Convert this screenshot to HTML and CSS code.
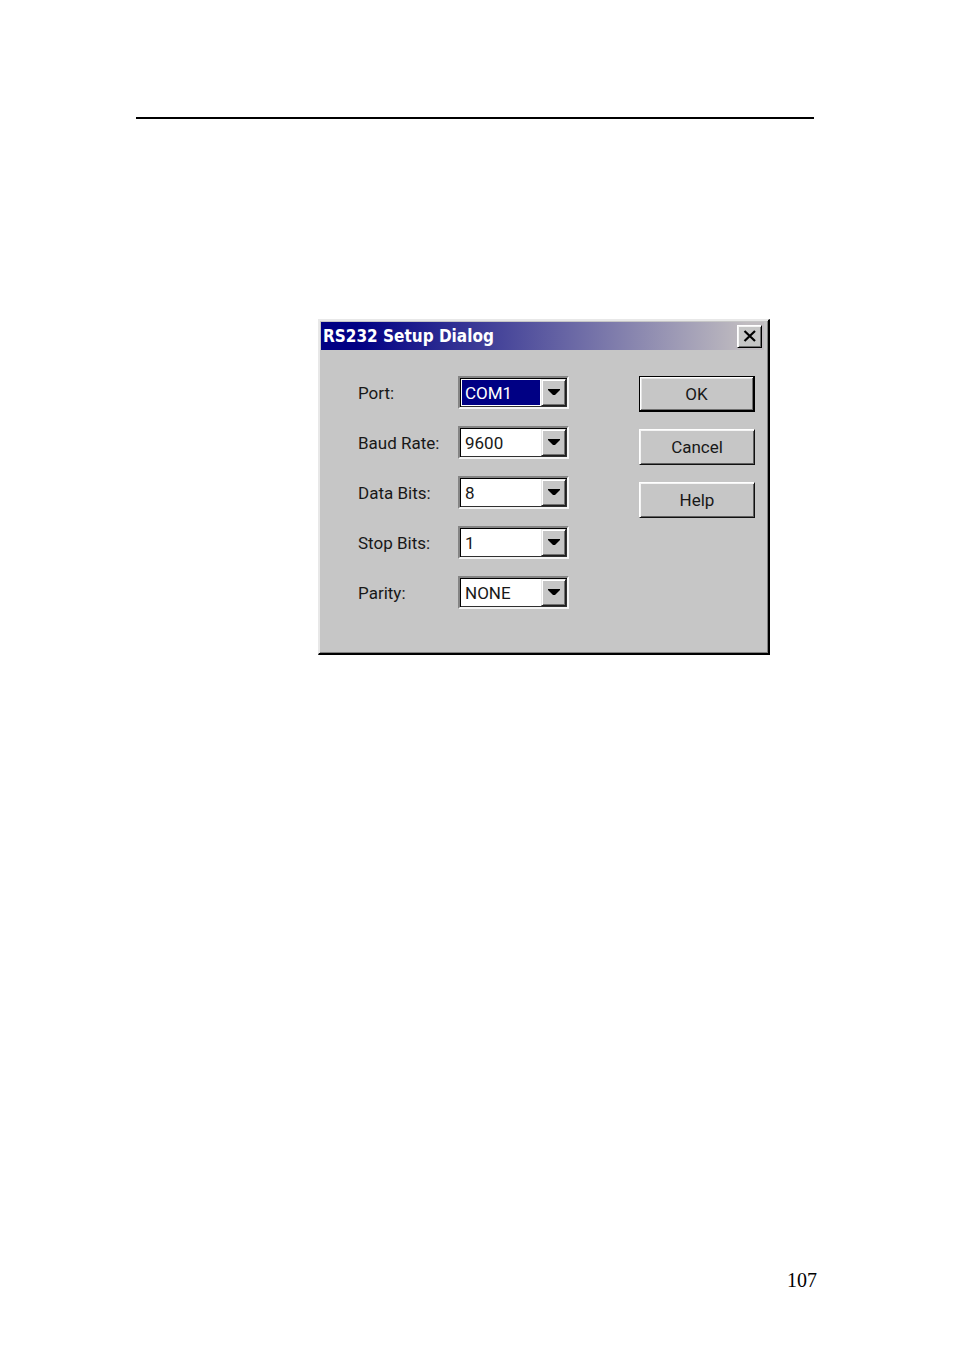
FILE: index.html
```html
<!DOCTYPE html>
<html lang="en">
<head>
<meta charset="utf-8">
<title>RS232 Setup Dialog</title>
<meta name="viewport" content="width=device-width, initial-scale=1">
<link rel="stylesheet" href="styles.css">
</head>
<body>
<div class="page">
  <hr class="rule">
  <main class="content">
    <section class="dialog" role="dialog" aria-labelledby="dialog-title">
      <header class="titlebar">
        <h1 class="title" id="dialog-title">RS232 Setup Dialog</h1>
        <button class="close" type="button" aria-label="Close">
          <svg width="14" height="12" viewBox="0 0 14 12" aria-hidden="true"><path d="M1.5 1 12 11M12 1 1.5 11" fill="none" stroke="#000" stroke-width="2.2"/></svg>
        </button>
      </header>
      <form class="form">
        <div class="fields">
          <div class="field">
            <label class="label" for="port">Port:</label>
            <div class="combo combo-active">
              <select class="select" id="port"><option>COM1</option></select>
              <span class="arrow"><svg width="12" height="7" viewBox="0 0 12 7" aria-hidden="true"><path d="M0 0h12v1L7 6H5L0 1z"/></svg></span>
            </div>
          </div>
          <div class="field">
            <label class="label" for="baud">Baud Rate:</label>
            <div class="combo">
              <select class="select" id="baud"><option>9600</option></select>
              <span class="arrow"><svg width="12" height="7" viewBox="0 0 12 7" aria-hidden="true"><path d="M0 0h12v1L7 6H5L0 1z"/></svg></span>
            </div>
          </div>
          <div class="field">
            <label class="label" for="data">Data Bits:</label>
            <div class="combo">
              <select class="select" id="data"><option>8</option></select>
              <span class="arrow"><svg width="12" height="7" viewBox="0 0 12 7" aria-hidden="true"><path d="M0 0h12v1L7 6H5L0 1z"/></svg></span>
            </div>
          </div>
          <div class="field">
            <label class="label" for="stop">Stop Bits:</label>
            <div class="combo">
              <select class="select" id="stop"><option>1</option></select>
              <span class="arrow"><svg width="12" height="7" viewBox="0 0 12 7" aria-hidden="true"><path d="M0 0h12v1L7 6H5L0 1z"/></svg></span>
            </div>
          </div>
          <div class="field">
            <label class="label" for="parity">Parity:</label>
            <div class="combo">
              <select class="select" id="parity"><option>NONE</option></select>
              <span class="arrow"><svg width="12" height="7" viewBox="0 0 12 7" aria-hidden="true"><path d="M0 0h12v1L7 6H5L0 1z"/></svg></span>
            </div>
          </div>
        </div>
        <div class="actions">
          <button class="button button-default" type="button">OK</button>
          <button class="button" type="button">Cancel</button>
          <button class="button" type="button">Help</button>
        </div>
      </form>
    </section>
  </main>
  <footer class="page-number">107</footer>
</div>
</body>
</html>
```

FILE: styles.css
```css
* {
  box-sizing: border-box;
}

body {
  margin: 0;
  background: #fff;
  color: #000;
  font-family: Roboto, "Liberation Sans", sans-serif;
  font-size: 17px;
  line-height: 20px;
}

.page {
  display: flex;
  flex-direction: column;
  min-height: 100vh;
  padding: 117px 137px 59px 136px;
}

.rule {
  width: 100%;
  max-width: 678px;
  height: 2px;
  margin: 0;
  border: 0;
  background: #000;
}

.content {
  flex: 1;
  padding: 200px 0 40px 182px;
}

.dialog {
  max-width: 452px;
  padding: 2px 4px 28px 2px;
  background: #c6c6c6;
  border: 1px solid;
  border-color: #e8e8e8 #000 #000 #e8e8e8;
  border-right-width: 2px;
  border-bottom-width: 2px;
  box-shadow: inset 1px 1px #e8e8e8, inset -1px -1px #808080;
}

.titlebar {
  display: flex;
  align-items: center;
  justify-content: space-between;
  height: 28px;
  padding: 0 2px;
  background: linear-gradient(to right, #000084 8%, #c0bcc0 96%);
}

.title {
  margin: 0;
  color: #fff;
  font-family: "DejaVu Sans Condensed", "Noto Sans", sans-serif;
  font-size: 17px;
  font-weight: 700;
  line-height: 20px;
}

.close {
  display: flex;
  align-items: center;
  justify-content: center;
  width: 25px;
  height: 23px;
  padding: 0;
  background: #c6c6c6;
  border: 1px solid;
  border-color: #fff #000 #000 #fff;
  box-shadow: inset 1px 1px #f4f4f4, inset -1px -1px #707070;
}

.form {
  display: flex;
  justify-content: space-between;
  padding: 26px 9px 16px 37px;
}

.fields {
  display: flex;
  flex-direction: column;
  gap: 17px;
}

.field {
  display: grid;
  grid-template-columns: 100px 111px;
  align-items: center;
}

.label {
  color: #181818;
}

.combo {
  display: flex;
  height: 33px;
  padding: 1px;
  background: #fff;
  border: 2px solid;
  border-color: #848484 #f4f4f4 #f4f4f4 #848484;
  box-shadow: inset 1px 1px #000, inset -1px -1px #303030;
}

.select {
  flex: 1;
  min-width: 0;
  margin: 1px;
  padding: 0 0 0 3px;
  color: #181818;
  background: #fff;
  border: 0;
  border-radius: 0;
  appearance: none;
  font: inherit;
}

.combo-active .select {
  color: #fff;
  background: #000084;
}

.arrow {
  display: flex;
  align-items: center;
  justify-content: center;
  width: 25px;
  background: #c6c6c6;
  border: 1px solid;
  border-color: #e8e8e8 #202020 #202020 #e8e8e8;
  box-shadow: inset 1px 1px #fff, inset -1px -1px #707070;
  pointer-events: none;
}

.actions {
  display: flex;
  flex-direction: column;
  gap: 17px;
}

.button {
  width: 116px;
  height: 36px;
  padding: 0;
  color: #181818;
  background: #c6c6c6;
  border: 1px solid;
  border-color: #fff #101010 #101010 #fff;
  border-radius: 0;
  box-shadow: inset 1px 1px #f4f4f4, inset -1px -1px #606060;
  font: inherit;
}

.button-default {
  border-color: #000;
  border-width: 1px 2px 2px 1px;
  box-shadow: inset 1px 1px #fff, inset -1px -1px #707070, inset 2px 2px #e4e4e4;
}

.page-number {
  font-family: "Liberation Serif", serif;
  font-size: 20px;
  line-height: 24px;
  text-align: right;
}
```
